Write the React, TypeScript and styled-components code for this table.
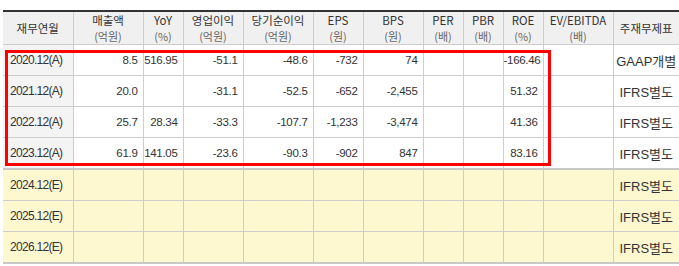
import styled, { createGlobalStyle } from 'styled-components';

const GlobalStyle = createGlobalStyle`
  body {
    margin: 0;
    background: #fff;
    font-family: "Liberation Sans", "Noto Sans CJK KR", sans-serif;
  }
`;

const Wrapper = styled.div`
  position: relative;
  padding: 10px 0 0 3px;
  width: 676px;
`;

const Table = styled.table`
  width: 676px;
  table-layout: fixed;
  border-collapse: collapse;
  border-top: 2px solid #333;
  border-bottom: 2px solid #c8c8c8;
  color: #333;
`;

const HeadCell = styled.th`
  height: 32px;
  padding: 0;
  background: #f0f0f0;
  border: 1px solid #cdcdcd;
  border-top: none;
  font-weight: normal;
  font-family: "Noto Sans CJK KR", sans-serif;
  font-size: 11.5px;
  line-height: 16px;
  text-align: center;
  color: #333;
  &:first-child {
    border-left: none;
  }
  &:last-child {
    border-right: none;
  }
`;

const Title = styled.span`
  display: block;
  line-height: 16px;
`;

const Unit = styled.span`
  display: block;
  color: #666;
  font-size: 11px;
  line-height: 16px;
`;

const Row = styled.tr<{ $estimate?: boolean; $split?: boolean }>`
  height: 31px;
  background: ${(p) => (p.$estimate ? '#fef8d1' : '#fff')};
  ${(p) => (p.$split ? 'border-top: 2px solid #c8c8c8;' : '')}
`;

const DateCell = styled.td<{ $estimate?: boolean }>`
  height: 30px;
  padding: 0 0 0 7px;
  border: 1px solid #cdcdcd;
  border-left: none;
  background: ${(p) => (p.$estimate ? '#fef8d1' : '#f4f4f4')};
  font-size: 12px;
  letter-spacing: -0.7px;
  text-align: left;
`;

const NumCell = styled.td`
  padding: 0 5px 0 0;
  border: 1px solid #cdcdcd;
  font-size: 11.5px;
  letter-spacing: -0.3px;
  text-align: right;
`;

const TypeCell = styled.td`
  padding: 0;
  border: 1px solid #cdcdcd;
  border-right: none;
  font-family: "Liberation Sans", "Noto Sans CJK KR", sans-serif;
  font-size: 13px;
  text-align: center;
  color: #333;
`;

const Highlight = styled.div`
  position: absolute;
  left: 5px;
  top: 50px;
  width: 540px;
  height: 110px;
  border: 3px solid #ff0000;
  pointer-events: none;
`;

const widths = [70, 70, 40, 60, 70, 50, 60, 40, 40, 40, 70, 66];

const headers: [string, string?][] = [
  ['재무연월'],
  ['매출액', '(억원)'],
  ['YoY', '(%)'],
  ['영업이익', '(억원)'],
  ['당기순이익', '(억원)'],
  ['EPS', '(원)'],
  ['BPS', '(원)'],
  ['PER', '(배)'],
  ['PBR', '(배)'],
  ['ROE', '(%)'],
  ['EV/EBITDA', '(배)'],
  ['주재무제표'],
];

const rows = [
  { date: '2020.12(A)', vals: ['8.5', '516.95', '-51.1', '-48.6', '-732', '74', '', '', '-166.46', ''], type: 'GAAP개별' },
  { date: '2021.12(A)', vals: ['20.0', '', '-31.1', '-52.5', '-652', '-2,455', '', '', '51.32', ''], type: 'IFRS별도' },
  { date: '2022.12(A)', vals: ['25.7', '28.34', '-33.3', '-107.7', '-1,233', '-3,474', '', '', '41.36', ''], type: 'IFRS별도' },
  { date: '2023.12(A)', vals: ['61.9', '141.05', '-23.6', '-90.3', '-902', '847', '', '', '83.16', ''], type: 'IFRS별도' },
  { date: '2024.12(E)', vals: Array(10).fill(''), type: 'IFRS별도', est: true },
  { date: '2025.12(E)', vals: Array(10).fill(''), type: 'IFRS별도', est: true },
  { date: '2026.12(E)', vals: Array(10).fill(''), type: 'IFRS별도', est: true },
];

const App = () => {
  return (
    <>
      <GlobalStyle />
      <Wrapper>
        <Table>
          <colgroup>
            {widths.map((w, i) => (
              <col key={i} style={{ width: w }} />
            ))}
          </colgroup>
          <thead>
            <tr>
              {headers.map(([title, unit], i) => (
                <HeadCell key={i}>
                  <Title>{title}</Title>
                  {unit && <Unit>{unit}</Unit>}
                </HeadCell>
              ))}
            </tr>
          </thead>
          <tbody>
            {rows.map((r, i) => (
              <Row key={r.date} $estimate={r.est} $split={i === 4}>
                <DateCell $estimate={r.est}>{r.date}</DateCell>
                {r.vals.map((v, j) => (
                  <NumCell key={j}>{v}</NumCell>
                ))}
                <TypeCell>{r.type}</TypeCell>
              </Row>
            ))}
          </tbody>
        </Table>
        <Highlight />
      </Wrapper>
    </>
  );
};

export default App;
